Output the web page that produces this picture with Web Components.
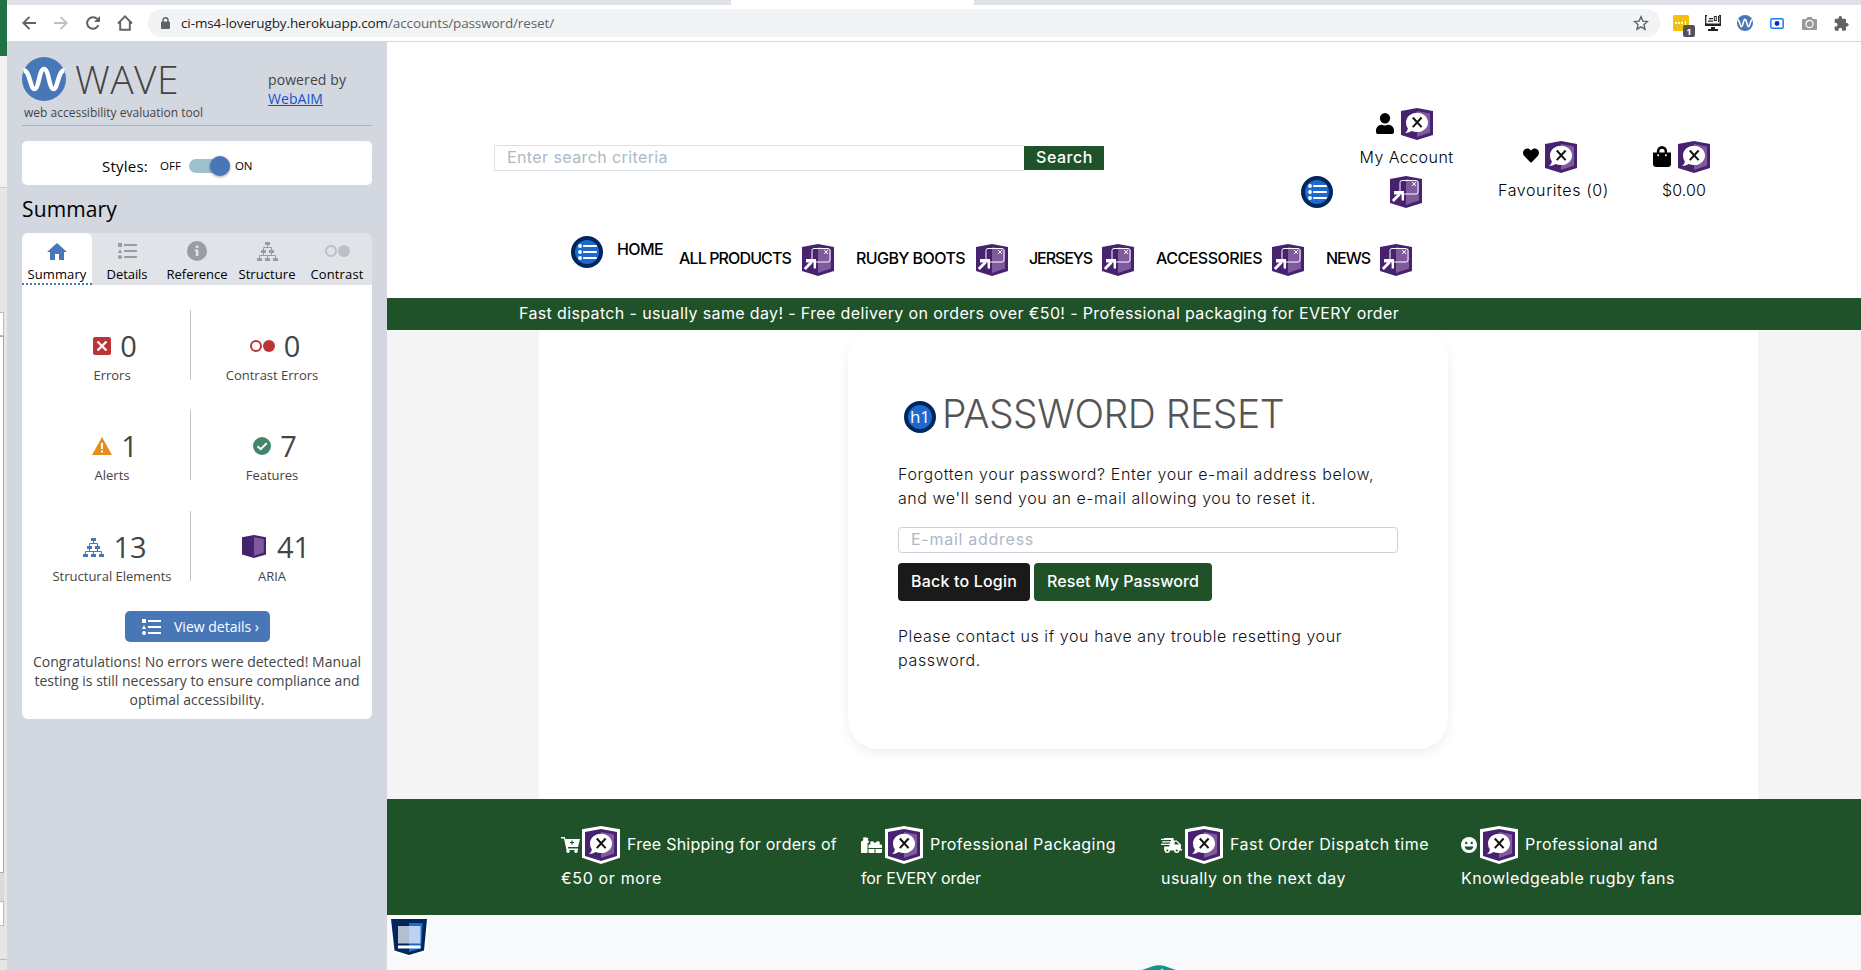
<!DOCTYPE html>
<html lang="en">
<head>
<meta charset="utf-8">
<title>Password Reset</title>
<style>
html,body{margin:0;padding:0;height:100%;overflow:hidden}
body{font-family:"Open Sans",sans-serif;font-size:14px;color:#444}
</style>
</head>
<body>
<desktop-view></desktop-view>
<script>
const ARIA = '<path d="M0 3 16 0l16 3v24l-16 5L0 27Z" fill="#47226f"/><path d="M16 3l13 2.5v19L16 29Z" fill="#7f5b9e"/>';
const BUBBLE = '<path d="M16 4.700c6.200 0 11 4.300 11 9.700s-4.800 9.700-11 9.700q-3 0-5.300-1Q7.800 25 4 25q2.800-2.200 2.900-4.500Q5 17.800 5 14.400C5 9 9.800 4.700 16 4.700Z" fill="#fff"/><path d="m11.800 9.500 8.800 9.600m0-9.600-8.800 9.600" stroke="#111" stroke-width="2"/>';
const LIST = (c) => `<g fill="${c}"><path d="M0 0h4v4H0zM0 10l2-4 2 4zM6 1h13v2H6zM6 7h13v2H6zM6 13h13v2H6z"/><circle cx="2" cy="14" r="2"/></g>`;
const TREE = (c) => `<g fill="${c}"><path d="M8 0h5v3H8zM4 8h5v3H4zM12 8h5v3h-5zM0 16h5v3H0zM8 16h5v3H8zM16 16h5v3h-5z"/><path d="M10.500 3v2.500M6.500 8V5.500h8V8M6.500 11v2.500M14.500 11v2.500M2.500 16v-2.500h16V16M10.500 13.500V16" fill="none" stroke="${c}"/></g>`;
const WAVE = '<circle cx="22" cy="22" r="22" fill="#4877b8"/><path d="M1.500 13.500C8 13 8 32 12.500 32S17 12 22 12s5 20 9.500 20S36 13 42.500 13.500" fill="none" stroke="#fff" stroke-width="4.500"/>';
const ICONS = {
 back:['0 0 14 14','<path d="M14 7H1.500M7.500 .8 1.300 7l6.200 6.200" fill="none" stroke="#5f6368" stroke-width="1.900"/>'],
 fwd:['0 0 14 14','<path d="M0 7h12.500M6.500 .8 12.700 7l-6.200 6.200" fill="none" stroke="#bdc1c6" stroke-width="1.900"/>'],
 reload:['0 0 14 14','<path d="M12.300 9.200A5.800 5.800 0 1 1 11.300 3.200" fill="none" stroke="#5f6368" stroke-width="2"/><path d="M14 0v6H8z" fill="#5f6368"/>'],
 home:['0 0 16 16','<path d="M1 8.500 8 1.400l7 7.100M3.200 7v7.800h9.600V7" fill="none" stroke="#5f6368" stroke-width="1.900"/>'],
 lock:['0 0 9 12','<path d="M2 5V3.200a2.500 2.500 0 0 1 5 0V5" fill="none" stroke="#5f6368" stroke-width="1.400"/><rect y="4.500" width="9" height="7.500" rx="1" fill="#5f6368"/>'],
 star:['0 0 16 16','<path d="m8 1.800 1.900 4.300 4.600.4-3.500 3.100 1 4.600-4-2.400-4 2.400 1-4.600-3.500-3.100 4.600-.4Z" fill="none" stroke="#5f6368" stroke-width="1.400"/>'],
 dots:['0 0 22 22','<rect width="16" height="16" rx="1.500" fill="#f0c20f"/><path d="M2 7h2v2H2zM5 7h2v2H5zM8 7h2v2H8zM12 6h1v4h-1z" fill="#fff"/><rect x="10" y="10" width="12" height="12" rx="2" fill="#505358"/><text x="16" y="19.500" font-family="Open Sans" font-weight="700" font-size="9.500" text-anchor="middle" fill="#fff">1</text>'],
 monitor:['0 0 16 17','<path d="M2 .7H.7V10h14.600V.7H14" fill="none" stroke="#222" stroke-width="1.300"/><path d="M0 8.500h16v2.500H0zM6 12h4v2h3v2H3v-2h3zM4 3h4v1.200H4zM3 5.500h5v1.200H3zM13 1h1.300v6H13z" fill="#222"/><rect x="9.300" y="1.600" width="2" height="4" fill="none" stroke="#222"/>'],
 wave:['0 0 44 44',WAVE],
 cam1:['0 0 14 11','<rect x=".8" y=".8" width="12.400" height="9.400" rx="1.500" fill="#fff" stroke="#1a7cf0" stroke-width="1.500"/><circle cx="7" cy="5.500" r="2.400" fill="#1a22c8"/>'],
 cam2:['0 0 15 13','<path d="M1 2h3l1.500-2h4L11 2h3a1 1 0 0 1 1 1v9a1 1 0 0 1-1 1H1a1 1 0 0 1-1-1V3a1 1 0 0 1 1-1Z" fill="#999"/><circle cx="7.500" cy="7" r="3.600" fill="none" stroke="#fff" stroke-width="1.200"/>'],
 puzzle:['1 1 22.500 21.500','<path d="M20.500 11H19V7a2 2 0 0 0-2-2h-4V3.500a2.500 2.500 0 0 0-5 0V5H4a2 2 0 0 0-2 2v3.800h1.500a2.700 2.700 0 0 1 0 5.400H2V20a2 2 0 0 0 2 2h3.800v-1.500a2.700 2.700 0 0 1 5.400 0V22H17a2 2 0 0 0 2-2v-4h1.500a2.500 2.500 0 0 0 0-5Z" fill="#5f6368"/>'],
 tabHome:['0 0 20 17','<path d="M10 0l10 9h-3v8h-5v-6H8v6H3V9H0Z" fill="#4877b8"/>'],
 tabList:['0 0 19 16',LIST('#999da2')],
 btnList:['0 0 19 16',LIST('#fff')],
 info:['0 0 20 20','<circle cx="10" cy="10" r="10" fill="#999da2"/><path d="M8.800 4.500h2.600v2.600H8.800zM7.800 8.500h3.600V15H8.800v-4.700h-1z" fill="#e0e3e8"/>'],
 tree:['0 0 21 19',TREE('#999da2')],
 treeBlue:['0 0 21 19',TREE('#4877b8')],
 dotsGrey:['0 0 25 12','<circle cx="6" cy="6" r="5" fill="none" stroke="#bcc0c4" stroke-width="2"/><circle cx="19" cy="6" r="6" fill="#bcc0c4"/>'],
 dotsRed:['0 0 25 12','<circle cx="6" cy="6" r="5" fill="none" stroke="#bb3537" stroke-width="2"/><circle cx="19" cy="6" r="6" fill="#bb3537"/>'],
 error:['0 0 18 18','<rect width="18" height="18" rx="2" fill="#bb3537"/><path d="m4.500 4.500 9 9m0-9-9 9" stroke="#fff" stroke-width="2.300"/>'],
 alert:['0 0 20 18','<path d="M10 0l10 18H0Z" fill="#e28e1c"/><path d="M9 6h2v6H9zM9 13.500h2v2H9z" fill="#fff"/>'],
 check:['0 0 18 18','<circle cx="9" cy="9" r="9" fill="#45856a"/><path d="m4.500 9.200 3.200 3 6-6" fill="none" stroke="#fff" stroke-width="2"/>'],
 box:['0 0 32 32',ARIA],
 label:['0 0 32 32',ARIA+BUBBLE],
 labelW:['0 0 38 38','<path d="M0 3.200 19 0l19 3.200v28.600L19 38 0 31.800Z" fill="#fff"/><g transform="translate(3 3)">'+ARIA+BUBBLE+'</g>'],
 popup:['0 0 32 32',ARIA+'<rect x="10" y="4.500" width="18" height="13.500" rx="2" fill="none" stroke="#fff"/><path d="m22.200 6 3.800 4m0-4-3.800 4" stroke="#fff"/><path d="M2.800 25 9.500 18.200" stroke="#fff" stroke-width="2.800"/><path d="M4 15H14v9.500h-2.400v-6H4Z" fill="#fff"/>'],
 menu:['0 0 32 32','<circle cx="16" cy="16" r="14" fill="#1d69d0" stroke="#00275b" stroke-width="4"/><path d="M13 10h12M13 16h12M13 22h12" stroke="#fff" stroke-width="2.200" stroke-linecap="round"/><g fill="#fff"><circle cx="9" cy="10" r="1.900"/><circle cx="9" cy="16" r="1.900"/><circle cx="9" cy="22" r="1.900"/></g>'],
 h1:['0 0 32 32','<circle cx="16" cy="16" r="14" fill="#1d69d0" stroke="#00275b" stroke-width="4"/><text x="16" y="22.300" font-family="Open Sans" font-weight="400" font-size="17" text-anchor="middle" fill="#fff">h1</text>'],
 user:['0 0 448 512','<path d="M224 256a128 128 0 1 0 0-256 128 128 0 0 0 0 256Zm90 32h-17a174 174 0 0 1-146 0h-17A134 134 0 0 0 0 422v42a48 48 0 0 0 48 48h352a48 48 0 0 0 48-48v-42a134 134 0 0 0-134-134Z"/>'],
 heart:['0 0 512 480','<path d="M462 47C407 1 326 9 276 61l-20 20-20-20C186 9 105 1 50 47-13 101-16 197 40 256l193 200c13 13 33 13 46 0l193-200c56-59 53-155-10-209Z"/>'],
 bag:['0 0 448 512','<path d="M352 160v-32a128 128 0 0 0-256 0v32H0v272a80 80 0 0 0 80 80h288a80 80 0 0 0 80-80V160Zm-192-32a64 64 0 0 1 128 0v32H160Zm160 120a24 24 0 1 1 0-48 24 24 0 0 1 0 48Zm-192 0a24 24 0 1 1 0-48 24 24 0 0 1 0 48Z"/>'],
 cart:['0 0 19 16','<path d="M0 0h3.800l.5 2H19l-2 8H7l.3 1.500H17V13H5.500L3 1.500H0Z"/><circle cx="7" cy="14.300" r="1.700"/><circle cx="15" cy="14.300" r="1.700"/><path d="M11 3.500v4M9 5.500h4" stroke="#205229" stroke-width="1.200"/>'],
 gifts:['0 0 21 16','<path d="M1.500 4 2.500 2 1.500.8 3.500.5 4.500 0l1 .8 2 .2L6.700 2.500 7.500 4H8v1.500L6.500 6v10H0V5q0-1 1.500-1ZM8 7.500h1.500Q8.500 4 11 4.200q2 .2 3 2 1-1.800 3-2 2.500-.2 1.500 3.300H20a1 1 0 0 1 1 1V11H7.500V8.500q0-1 .5-1ZM7.500 12H13.500v4h-5q-1 0-1-1Zm7 0H21v3q0 1-1 1h-5.500Z"/>'],
 truck:['0 0 20 16','<path d="M3 1h9v2.500h3l4 4V12h1v1.500H3V9.500h5V8H0V6.800h8.500V5.500H1V4.300h8.500V3H0V1.800h3Z"/><circle cx="6" cy="13.500" r="2.500"/><circle cx="15" cy="13.500" r="2.500"/><g fill="#205229"><path d="M13 4.800h1.700l2.500 2.700H13z"/><circle cx="6" cy="13.500" r="1"/><circle cx="15" cy="13.500" r="1"/></g>'],
 smile:['0 0 16 16','<circle cx="8" cy="8" r="8"/><g fill="#205229"><circle cx="5.300" cy="6" r="1.200"/><circle cx="10.700" cy="6" r="1.200"/><path d="M3.500 9.500h9Q11.500 13 8 13T3.500 9.500Z"/></g>'],
 footer:['0 0 38 38','<path d="M0 0h38v31l-5 5-14 2-14-2-3-5Z" fill="#fff"/><path d="M1 1h36l-3 31.500-15 4.500-14.500-4.500Z" fill="#00275b"/><path d="M19 5h13.800L31 30.500 19 34Z" fill="#1d69d0"/><path d="M8 8h11v17.500H8Z" fill="#b3bfd1"/><path d="M19 8h11.500v17.500H19Z" fill="#bcd2f1"/><path d="M8 27.500h22.500v3H8Z" fill="#fff"/>'],
 hex:['0 0 32 5','<path d="M0 5Q6 3 10 1.200 16-.8 22 1.200 26 3 32 5Z" fill="#16938a"/><path d="m17 5 2.500-1.500V5Z" fill="#fff"/>']
};
class UiIcon extends HTMLElement{
  connectedCallback(){
    const [box,body]=ICONS[this.getAttribute('name')];
    this.attachShadow({mode:'open'}).innerHTML=`<style>:host{display:block;flex:none;width:${this.getAttribute('w')}px;height:${this.getAttribute('h')}px}svg{display:block;width:100%;height:100%;fill:currentColor}</style><svg viewBox="${box}" preserveAspectRatio="none">${body}</svg>`;
  }
}
customElements.define('ui-icon',UiIcon);

/* A single line of text whose tracking is adjusted to fill the width given in "w". */
class FitText extends HTMLElement{
  connectedCallback(){
    const w=+this.getAttribute('w');
    this.attachShadow({mode:'open'}).innerHTML=`<style>:host{display:block;flex:none;width:${w}px;white-space:nowrap}span{display:inline-block;text-decoration:inherit}</style><span><slot></slot></span>`;
    const n=this.textContent.length, nat=this.shadowRoot.querySelector('span').getBoundingClientRect().width;
    if(nat) this.style.letterSpacing=((w-nat)/n).toFixed(3)+'px';
  }
}
customElements.define('fit-text',FitText);

const define=(tag,html)=>customElements.define(tag,class extends HTMLElement{
  connectedCallback(){
    if(this.shadowRoot) return;
    const t=document.createElement('template'); t.innerHTML=html;
    this.attachShadow({mode:'open'}).append(t.content.cloneNode(true));
  }
});

define('back-window',`<style>:host{display:flex;flex-direction:column;width:7px;height:970px;background:#e6e6e6;overflow:hidden;flex:none}
.a{height:56px;background:#217346}.b{height:131px;background:#f1f1f1;border-bottom:1px solid #ccc}
.c{height:22px;width:3px;margin-top:124px;background:#fff;border:1px solid #bbb;border-left:0}
.d{height:535px;width:3px;background:#fff;border:1px solid #aaa;border-left:0}
.e{height:28px;width:4px;background:#dadada}.f{height:23px;width:3px;background:#fff;border:1px solid #bbb;border-left:0}
.g{margin-top:33px;height:1px;background:#bbb}</style>
<div class="a"></div><div class="b"></div><div class="c"></div><div class="d"></div><div class="e"></div><div class="f"></div><div class="g"></div>`);

define('browser-bar',`<style>:host{display:block;height:42px;background:#fff;flex:none;box-sizing:border-box;border-bottom:1px solid #d5d7da}
.t{height:5px;background:#dee1e6;display:flex}.t i{margin-left:724px;width:243px;background:#fff;border-radius:0 0 2px 2px}
.r{height:36px;display:flex;align-items:center;padding-left:15px}
.o{display:flex;align-items:center;width:1512px;height:28px;border-radius:14px;background:#f1f3f4;margin-left:15px;box-sizing:border-box;padding:0 11px 0 13px;font-size:13.500px;color:#5f6368}
.o ui-icon+fit-text{margin-left:11px}</style>
<div class="t"><i></i></div>
<div class="r"><ui-icon name="back" w="14" h="14"></ui-icon><ui-icon name="fwd" w="14" h="14" style="margin-left:18px"></ui-icon><ui-icon name="reload" w="14" h="14" style="margin-left:18px"></ui-icon><ui-icon name="home" w="16" h="16" style="margin-left:17px"></ui-icon>
<div class="o"><ui-icon name="lock" w="9" h="12"></ui-icon><fit-text w="207" style="color:#202124">ci-ms4-loverugby.herokuapp.com</fit-text><fit-text w="166">/accounts/password/reset/</fit-text><ui-icon name="star" w="16" h="16" style="margin-left:auto"></ui-icon></div>
<ui-icon name="dots" w="22" h="22" style="margin:6px 0 0 13px"></ui-icon><ui-icon name="monitor" w="16" h="17" style="margin-left:10px"></ui-icon><ui-icon name="wave" w="16" h="16" style="margin-left:16px"></ui-icon><ui-icon name="cam1" w="14" h="11" style="margin-left:17px"></ui-icon><ui-icon name="cam2" w="15" h="13" style="margin-left:18px"></ui-icon><ui-icon name="puzzle" w="15" h="15" style="margin-left:17px"></ui-icon></div>`);

define('stat-cell',`<style>:host{display:block;text-align:center;height:70px;box-sizing:border-box;padding:17px 0 0 2px;font-size:13px}
.n{display:flex;justify-content:center;align-items:center;gap:9px;font-size:29px;line-height:38px;height:38px;padding-left:6px}.l{line-height:20px}</style>
<div class="n"><slot name="icon"></slot><slot name="n"></slot></div><div class="l"><slot></slot></div>`);

define('wave-tab',`<style>:host{display:flex;flex-direction:column;align-items:center;width:70px;height:52px;box-sizing:border-box;font-size:13px;color:#000}
:host([on]){background:#fff;border-radius:6px 6px 0 0;border-bottom:2px dotted #4877b8}
.i{height:36px;display:flex;align-items:center}.l{line-height:13px;margin-top:-1px}</style><div class="i"><slot name="icon"></slot></div><div class="l"><slot></slot></div>`);

define('wave-panel',`<style>:host{display:block;width:380px;flex:none;background:#d3d8e0;box-sizing:border-box;padding:0 15px;color:#444}
header{height:83px;border-bottom:1px solid #aeb2b7;display:flex;box-sizing:content-box}
.lg{width:246px}.lr{display:flex;align-items:center;padding-top:15px;height:44px}
.w{font-size:39px;font-weight:300;line-height:44px;margin:0 0 0 9px;color:#444}
.s{font-size:12px;line-height:16px;margin:4px 0 0 2px}
.p{padding-top:28px;line-height:19px;font-size:14px}.p fit-text+fit-text{color:#1155cc;text-decoration:underline}
.st{margin-top:15px;height:44px;background:#fff;border-radius:5px;display:flex;align-items:center;padding:5px 0 0 80px;box-sizing:border-box;color:#000}
.tg{width:41px;height:14px;border-radius:7px;background:#9fc1cc;margin:0 0 0 8px;display:flex;align-items:center;justify-content:flex-end}.tg i{flex:none;width:20px;height:20px;border-radius:50%;background:#4877b8;box-shadow:0 1px 3px #0006}
h2{font-weight:400;font-size:21px;line-height:30px;margin:9px 0 9px;color:#000}
nav{display:flex;background:#e0e3e8;border-radius:6px 6px 0 0}
.b{background:#fff;height:434px;border-radius:0 0 6px 6px;padding-top:25px;box-sizing:border-box}
.row{display:flex;margin:0 10px 30px}.row stat-cell{width:158px}.row stat-cell+stat-cell{border-left:1px solid #c4c4c4;width:161px}
.row:nth-child(2){margin-bottom:31px}
.btn{width:145px;height:31px;border-radius:5px;background:#4877b8;color:#fff;display:flex;align-items:center;padding-left:17px;box-sizing:border-box;margin:0 0 10px 103px}
.btn fit-text{margin-left:13px;margin-top:-1px}
.c{line-height:19px;display:flex;flex-direction:column;align-items:center}</style>
<header><div class="lg"><div class="lr"><ui-icon name="wave" w="44" h="44"></ui-icon><fit-text class="w" w="104">WAVE</fit-text></div><fit-text class="s" w="179">web accessibility evaluation tool</fit-text></div><div class="p"><fit-text w="78">powered by</fit-text><fit-text w="55">WebAIM</fit-text></div></header>
<div class="st"><fit-text w="46" style="font-size:15px">Styles:</fit-text><fit-text w="21" style="margin-left:12px;font-size:11.500px">OFF</fit-text><div class="tg"><i></i></div><fit-text w="17" style="margin-left:5px;font-size:11.500px">ON</fit-text></div>
<h2><fit-text w="95">Summary</fit-text></h2>
<nav><wave-tab on><ui-icon slot="icon" name="tabHome" w="20" h="17"></ui-icon><fit-text w="59">Summary</fit-text></wave-tab><wave-tab><ui-icon slot="icon" name="tabList" w="19" h="16"></ui-icon><fit-text w="41">Details</fit-text></wave-tab><wave-tab><ui-icon slot="icon" name="info" w="20" h="20"></ui-icon><fit-text w="61">Reference</fit-text></wave-tab><wave-tab><ui-icon slot="icon" name="tree" w="21" h="19"></ui-icon><fit-text w="57">Structure</fit-text></wave-tab><wave-tab><ui-icon slot="icon" name="dotsGrey" w="25" h="12"></ui-icon><fit-text w="53">Contrast</fit-text></wave-tab></nav>
<div class="b">
<div class="row"><stat-cell><ui-icon slot="icon" name="error" w="18" h="18"></ui-icon><span slot="n">0</span>Errors</stat-cell><stat-cell><ui-icon slot="icon" name="dotsRed" w="25" h="12"></ui-icon><span slot="n">0</span>Contrast Errors</stat-cell></div>
<div class="row"><stat-cell><ui-icon slot="icon" name="alert" w="20" h="18"></ui-icon><span slot="n">1</span>Alerts</stat-cell><stat-cell><ui-icon slot="icon" name="check" w="18" h="18"></ui-icon><span slot="n">7</span>Features</stat-cell></div>
<div class="row"><stat-cell><ui-icon slot="icon" name="treeBlue" w="21" h="19"></ui-icon><span slot="n">13</span>Structural Elements</stat-cell><stat-cell><ui-icon slot="icon" name="box" w="24" h="23" style="margin:-2px 2px 0 2px"></ui-icon><span slot="n">41</span>ARIA</stat-cell></div>
<div class="btn"><ui-icon name="btnList" w="19" h="16"></ui-icon><fit-text w="85">View details ›</fit-text></div>
<div class="c"><fit-text w="328">Congratulations! No errors were detected! Manual</fit-text><fit-text w="325">testing is still necessary to ensure compliance and</fit-text><fit-text w="135">optimal accessibility.</fit-text></div>
</div>`);

define('site-header',`<style>:host{display:block;height:256px;background:#fff;color:#000;line-height:24px}
.top{display:flex;align-items:flex-start;height:194px;padding-left:107px}
.in{margin-top:103px;width:530px;height:26px;box-sizing:border-box;border:1px solid #dcdfe4;border-right:0;padding-left:12px;color:#adb8c4;line-height:22px}
.sb{margin-top:104px;width:80px;height:24px;background:#205229;color:#fff;font-weight:500;padding-left:12px;box-sizing:border-box;line-height:22px}
.col{display:flex;flex-direction:column;align-items:center;font-weight:350}.ic{display:flex;align-items:center;gap:7px;margin-bottom:5px}
nav{display:flex;align-items:flex-start;padding-left:184px;font-weight:500;height:62px}
nav ui-icon{margin-top:8px}nav fit-text{margin-top:10px}nav ui-icon+fit-text{margin-left:22px}nav fit-text+ui-icon{margin-left:11px}</style>
<div class="top"><div class="in"><fit-text w="161">Enter search criteria</fit-text></div><div class="sb"><fit-text w="57">Search</fit-text></div>
<ui-icon name="menu" w="32" h="32" style="margin:134px 0 0 197px"></ui-icon>
<div class="col" style="margin:66px 0 0 26px;width:95px"><div class="ic" style="margin-right:5px"><ui-icon name="user" w="18" h="21" style="margin-bottom:2px"></ui-icon><ui-icon name="label" w="32" h="32"></ui-icon></div><fit-text w="94">My Account</fit-text><ui-icon name="popup" w="32" h="32" style="margin:7px 2px 0 0"></ui-icon></div>
<div class="col" style="margin:99px 0 0 44px;width:111px"><div class="ic" style="margin-right:8px;gap:6px"><ui-icon name="heart" w="16" h="15" style="margin-bottom:3px"></ui-icon><ui-icon name="label" w="32" h="32"></ui-icon></div><fit-text w="111">Favourites (0)</fit-text></div>
<div class="col" style="margin:99px 0 0 44px"><div class="ic"><ui-icon name="bag" w="18" h="21" style="margin-bottom:1px"></ui-icon><ui-icon name="label" w="32" h="32"></ui-icon></div><fit-text w="44" style="margin-left:5px">$0.00</fit-text></div></div>
<nav><ui-icon name="menu" w="32" h="32" style="margin-top:0"></ui-icon><fit-text w="46" style="margin:1px 16px 0 14px">HOME</fit-text><fit-text w="112">ALL PRODUCTS</fit-text><ui-icon name="popup" w="32" h="32"></ui-icon><fit-text w="109">RUGBY BOOTS</fit-text><ui-icon name="popup" w="32" h="32"></ui-icon><fit-text w="63" style="margin-left:21px">JERSEYS</fit-text><ui-icon name="popup" w="32" h="32" style="margin-left:10px"></ui-icon><fit-text w="106">ACCESSORIES</fit-text><ui-icon name="popup" w="32" h="32" style="margin-left:10px"></ui-icon><fit-text w="44">NEWS</fit-text><ui-icon name="popup" w="32" h="32" style="margin-left:10px"></ui-icon></nav>`);

define('reset-card',`<style>:host{display:block;width:600px;height:419px;box-sizing:border-box;border-radius:30px;padding:64px 50px 0;background:#fff;box-shadow:0 4px 12px #00000012;color:#111;font-weight:350;line-height:24px}
.h{display:flex;align-items:center;height:40px;padding-left:6px;margin-bottom:28px;color:#555;font-size:39px;line-height:40px}.h ui-icon{margin:0 6px 0 0}
.in{border:1px solid #ccd0d8;border-radius:4px;height:24px;line-height:22px;margin:17px 0 10px;padding-left:12px;color:#adb8c8;font-weight:400}
.bt{display:flex;gap:4px;font-weight:500;color:#fff;line-height:36px;margin-bottom:23px}.bt div{background:#1a1a1a;border-radius:4px;height:38px;padding:0 13px}.bt div+div{background:#205229}</style>
<div class="h"><ui-icon name="h1" w="32" h="32" style="margin-top:6px"></ui-icon><fit-text w="342">PASSWORD RESET</fit-text></div>
<fit-text w="476">Forgotten your password? Enter your e-mail address below,</fit-text><fit-text w="418">and we'll send you an e-mail allowing you to reset it.</fit-text>
<div class="in"><fit-text w="123">E-mail address</fit-text></div>
<div class="bt"><div><fit-text w="106">Back to Login</fit-text></div><div><fit-text w="152">Reset My Password</fit-text></div></div>
<fit-text w="444">Please contact us if you have any trouble resetting your</fit-text><fit-text w="83">password.</fit-text>`);

define('perk-item',`<style>:host{display:block;width:300px;line-height:24px}.r{display:flex;align-items:center;height:38px;margin-bottom:2px}</style><div class="r"><slot name="icon"></slot><slot name="a"></slot></div><slot></slot>`);

define('site-page',`<style>:host{display:block;flex:1;font-family:Inter,sans-serif;font-size:16px;background:#f8f9fb}
.ban{height:32px;background:#205229;color:#fff;padding-left:132px;line-height:30px}
.body{height:469px;background:#f4f4f4;padding-left:152px}.body>div{width:1219px;height:469px;background:#fff;box-sizing:border-box;padding-left:309px;overflow:hidden}
.ft{display:flex;height:116px;background:#205229;color:#fff;box-sizing:border-box;padding:27px 0 0 174px}
.ft ui-icon[name=labelW]{margin:0 7px 0 3px}.ft fit-text[slot]{margin-top:-2px}
.ft perk-item:first-child ui-icon[name=labelW]{margin-left:2px}
.low{display:flex;height:55px;padding:3px 0 0 3px;box-sizing:border-box;overflow:hidden}</style>
<site-header></site-header>
<div class="ban"><fit-text w="880">Fast dispatch - usually same day! - Free delivery on orders over €50! - Professional packaging for EVERY order</fit-text></div>
<div class="body"><div><reset-card></reset-card></div></div>
<div class="ft">
<perk-item><ui-icon slot="icon" name="cart" w="19" h="16"></ui-icon><ui-icon slot="a" name="labelW" w="38" h="38"></ui-icon><fit-text slot="a" w="210">Free Shipping for orders of</fit-text><fit-text w="101">€50 or more</fit-text></perk-item>
<perk-item><ui-icon slot="icon" name="gifts" w="21" h="16"></ui-icon><ui-icon slot="a" name="labelW" w="38" h="38"></ui-icon><fit-text slot="a" w="186">Professional Packaging</fit-text><fit-text w="120">for EVERY order</fit-text></perk-item>
<perk-item><ui-icon slot="icon" name="truck" w="21" h="16"></ui-icon><ui-icon slot="a" name="labelW" w="38" h="38"></ui-icon><fit-text slot="a" w="199">Fast Order Dispatch time</fit-text><fit-text w="185">usually on the next day</fit-text></perk-item>
<perk-item><ui-icon slot="icon" name="smile" w="16" h="16"></ui-icon><ui-icon slot="a" name="labelW" w="38" h="38"></ui-icon><fit-text slot="a" w="133">Professional and</fit-text><fit-text w="214">Knowledgeable rugby fans</fit-text></perk-item>
</div>
<div class="low"><ui-icon name="footer" w="38" h="38"></ui-icon><ui-icon name="hex" w="34" h="5" style="margin:47px 0 0 714px"></ui-icon></div>`);

define('desktop-view',`<style>:host{display:flex;width:1861px;height:970px;overflow:hidden}
.win{flex:1;display:flex;flex-direction:column;min-width:0}.m{display:flex;flex:1;min-height:0}</style>
<back-window></back-window><div class="win"><browser-bar></browser-bar><div class="m"><wave-panel></wave-panel><site-page></site-page></div></div>`);
</script>
</body>
</html>
